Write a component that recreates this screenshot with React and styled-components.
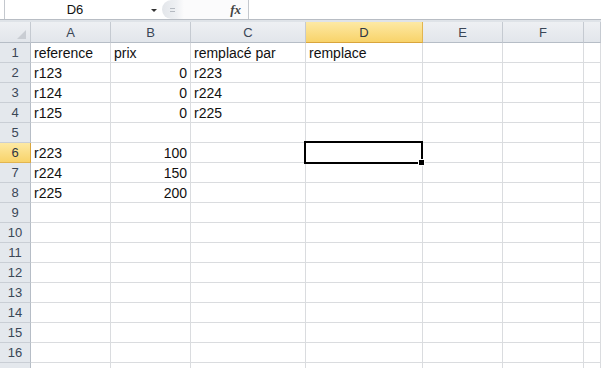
import React from 'react';
import styled, { createGlobalStyle, css } from 'styled-components';

const Global = createGlobalStyle`
  html, body { margin: 0; padding: 0; background: #fff; }
  body { font-family: "Liberation Sans", Arial, sans-serif; overflow: hidden; }
`;

const Page = styled.div`
  width: 601px;
  height: 368px;
  overflow: hidden;
  display: flex;
  flex-direction: column;
  background: #fff;
`;

const FormulaBar = styled.div`
  flex: none;
  height: 19px;
  display: flex;
  align-items: stretch;
  border-bottom: 1px solid #b8bdc4;
  background: #fff;
`;

const NameBox = styled.div`
  margin-left: 4px;
  width: 140px;
  border-left: 1px solid #c4c8ce;
  display: flex;
  align-items: center;
  justify-content: center;
  font-size: 13px;
  color: #111;
`;

const DropArrow = styled.div`
  width: 17px;
  display: flex;
  align-items: center;
  justify-content: center;
  padding-top: 1px;
  &::before {
    content: '';
    border-left: 3px solid transparent;
    border-right: 3px solid transparent;
    border-top: 3px solid #333;
  }
`;

const Tools = styled.div`
  width: 87px;
  display: flex;
  align-items: center;
  justify-content: space-between;
  border-right: 1px solid #c4c8ce;
  border-radius: 10px 0 0 10px;
  background: linear-gradient(to right, #e3e6ea 0px, #eef0f3 14px, #fbfbfc 22px, #fbfbfc);
  padding-right: 7px;
  box-sizing: border-box;
`;

const Grip = styled.div`
  margin-left: 8px;
  width: 5px;
  height: 2px;
  border-top: 1px solid #b5bac1;
  border-bottom: 1px solid #b5bac1;
  box-sizing: content-box;
`;

const Fx = styled.span`
  font-family: "Liberation Serif", "Times New Roman", serif;
  font-style: italic;
  font-weight: bold;
  font-size: 13px;
  color: #444;
`;

const Input = styled.div`
  flex: 1;
  background: #fff;
`;

const Band = styled.div`
  flex: none;
  height: 2px;
  background: #dfe3e8;
`;

const Grid = styled.div`
  display: grid;
  grid-template-columns: 31px 80px 80px 115px 117px 80px 81px 1fr;
  grid-template-rows: 21px;
  grid-auto-rows: 20px;
  font-size: 14px;
  color: #111;
`;

const headerBase = css`
  display: flex;
  align-items: center;
  justify-content: center;
  font-size: 13px;
  color: #3a4656;
  box-sizing: border-box;
`;

const yellow = css`
  background: linear-gradient(to bottom, #fde9a4, #f8d36a);
  color: #2e3644;
`;

const Corner = styled.div`
  ${headerBase};
  position: relative;
  background: linear-gradient(to bottom, #eef0f3, #e2e6eb);
  border-right: 1px solid #c5cad1;
  border-bottom: 1px solid #b6bdc6;
  &::after {
    content: '';
    position: absolute;
    right: 4px;
    bottom: 3px;
    border-left: 9px solid transparent;
    border-bottom: 9px solid #c9cdd3;
  }
`;

const ColHead = styled.div`
  ${headerBase};
  background: linear-gradient(to bottom, #eef0f3, #e2e6eb);
  border-right: 1px solid #c5cad1;
  border-bottom: 1px solid #b6bdc6;
  ${(p) => p.$active && css`
    ${yellow};
    border-right-color: #e2b550;
    border-bottom: 1px solid #d9a53c;
  `}
`;

const RowHead = styled.div`
  ${headerBase};
  background: #e4e8ed;
  border-right: 1px solid #b6bdc6;
  border-bottom: 1px solid #c9ced5;
  ${(p) => p.$active && css`
    ${yellow};
    border-right-color: #d9a53c;
    border-bottom-color: #e2b550;
  `}
`;

const Cell = styled.div`
  position: relative;
  box-sizing: border-box;
  border-right: 1px solid #dadcdf;
  border-bottom: 1px solid #dadcdf;
  display: flex;
  align-items: center;
  justify-content: ${(p) => (p.$num ? 'flex-end' : 'flex-start')};
  padding: 0 ${(p) => (p.$num ? '3px' : '0')} 0 ${(p) => (p.$num ? '0' : '3px')};
  white-space: nowrap;
  overflow: visible;
`;

const Selection = styled.div`
  position: absolute;
  left: -2px;
  top: -2px;
  right: -1px;
  bottom: -2px;
  border: 2px solid #000;
  pointer-events: none;
  z-index: 2;
  &::after {
    content: '';
    position: absolute;
    right: -4px;
    bottom: -4px;
    width: 5px;
    height: 5px;
    background: #000;
    border: 1px solid #fff;
  }
`;

const cols = ['A', 'B', 'C', 'D', 'E', 'F', 'G'];
const visibleCols = ['A', 'B', 'C', 'D', 'E', 'F'];
const data = {
  1: ['reference', 'prix', 'remplacé par', 'remplace'],
  2: ['r123', 0, 'r223'],
  3: ['r124', 0, 'r224'],
  4: ['r125', 0, 'r225'],
  6: ['r223', 100],
  7: ['r224', 150],
  8: ['r225', 200],
};

export default function App() {
  const rows = Array.from({ length: 17 }, (_, i) => i + 1);
  return (
    <Page>
      <Global />
      <FormulaBar>
        <NameBox>D6</NameBox>
        <DropArrow />
        <Tools>
          <Grip />
          <Fx>fx</Fx>
        </Tools>
        <Input />
      </FormulaBar>
      <Band />
      <Grid>
        <Corner />
        {cols.map((c) => (
          <ColHead key={c} $active={c === 'D'}>
            {visibleCols.includes(c) ? c : null}
          </ColHead>
        ))}
        {rows.map((r) => (
          <React.Fragment key={r}>
            <RowHead $active={r === 6}>{r <= 16 ? r : null}</RowHead>
            {cols.map((c, ci) => {
              const v = data[r] ? data[r][ci] : undefined;
              const num = typeof v === 'number';
              return (
                <Cell key={c} $num={num}>
                  {v}
                  {r === 6 && c === 'D' && <Selection />}
                </Cell>
              );
            })}
          </React.Fragment>
        ))}
      </Grid>
    </Page>
  );
}
